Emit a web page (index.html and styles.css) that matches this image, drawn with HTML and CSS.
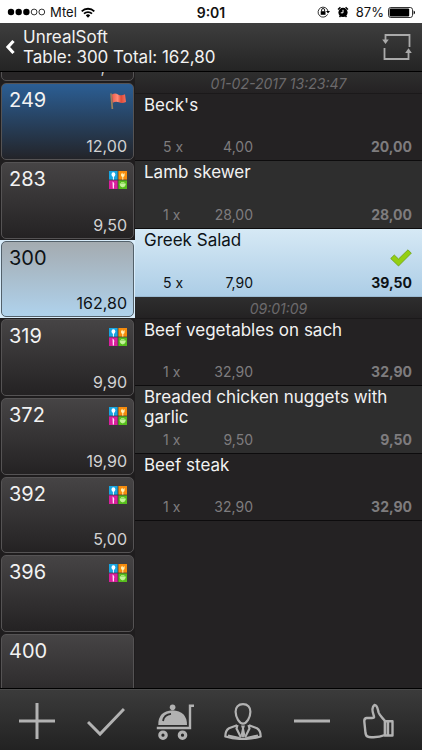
FILE: index.html
```html
<!DOCTYPE html>
<html lang="en">
<head>
<meta charset="utf-8">
<meta name="viewport" content="width=device-width, initial-scale=1">
<title>UnrealSoft</title>
<link rel="stylesheet" href="styles.css">
</head>
<body>
<svg class="defs" aria-hidden="true">
  <linearGradient id="flagred" x1="0" x2="1" y1="0" y2="0"><stop offset="0" stop-color="#ee5c49"/><stop offset=".4" stop-color="#ff8b78"/><stop offset=".65" stop-color="#dc4a38"/><stop offset="1" stop-color="#f4705e"/></linearGradient>
  <symbol id="food" viewBox="0 0 18 18">
    <rect width="8.6" height="8.6" fill="#18a5e0"/><rect x="9.4" width="8.6" height="8.6" fill="#f68b0c"/>
    <rect y="9.4" width="8.6" height="8.6" fill="#d91f9c"/><rect x="9.4" y="9.4" width="8.6" height="8.6" fill="#56bd1d"/>
    <ellipse cx="4.4" cy="3.6" rx="1.9" ry="2.4" fill="#fff"/><path d="M4.4 5v3.6" stroke="#fff" stroke-width="1"/>
    <path d="M12 1.8v2.4q0 1.7 1.8 1.7t1.8-1.7V1.8l-1 1.6-.8-1.8-.8 1.8z" fill="#fff3b8"/><path d="M13.8 5v3.6" stroke="#fff3b8" stroke-width="1"/>
    <path d="M3.5 10.5q2.5 1.5 1.5 4v3H3.8z" fill="#ffe0f6"/>
    <path d="M11 12.8h5.4q-.3 3.2-2.7 3.2T11 12.8zM12 11.5h3.4" fill="#c4f39a" stroke="#c4f39a" stroke-width=".7"/>
  </symbol>
</svg>

<div class="status">
  <div class="carrier">
    <svg width="39" height="8" viewBox="0 0 39 8"><g fill="#000"><circle cx="4" cy="4" r="3.2"/><circle cx="11.7" cy="4" r="3.2"/><circle cx="19.4" cy="4" r="3.2"/></g><g fill="none" stroke="#000" stroke-width=".8"><circle cx="27.1" cy="4" r="2.9"/><circle cx="34.8" cy="4" r="2.9"/></g></svg>
    <span>Mtel</span>
    <svg class="wifi" width="14" height="11" viewBox="0 0 14 11"><g fill="none" stroke="#000" stroke-width="1.8"><path d="M.7 4.3a9 9 0 0 1 12.6 0"/><path d="M3 6.7a5.7 5.7 0 0 1 8 0"/></g><path d="M4.8 8.4a3.2 3.2 0 0 1 4.4 0L7 10.7z"/></svg>
  </div>
  <div class="clock">9:01</div>
  <div class="power">
    <svg width="13" height="12" viewBox="0 0 13 12"><path d="M10.6 8.3A5 5 0 1 1 11 5.2" fill="none" stroke="#000" stroke-width=".8"/><path d="M9 5h4l-2 2.6z"/><rect x="3.7" y="5.2" width="4.8" height="3.6"/><path d="M4.6 5.4V4a1.5 1.5 0 0 1 3 0v1.4" fill="none" stroke="#000" stroke-width=".9"/></svg>
    <svg class="alarm" width="12" height="12" viewBox="0 0 12 12"><circle cx="6" cy="6.4" r="4.6"/><path d="M1 3.4 3.4 1.2M11 3.4 8.6 1.2M2.5 11l1.2-1.4M9.5 11 8.3 9.6" stroke="#000" stroke-width="1.4"/><path d="M6 3.8v3H3.8" fill="none" stroke="#fff"/></svg>
    <span>87%</span>
    <svg width="27" height="11" viewBox="0 0 27 11"><rect x=".5" y=".5" width="24" height="10" rx="2.2" fill="#fff" stroke="#000" stroke-width=".8"/><rect x="1.6" y="1.6" width="19.6" height="7.8" rx="1"/><path d="M25.6 3.6q1.4.4 1.4 1.9t-1.4 1.9z"/></svg>
  </div>
</div>

<header class="topbar">
  <button class="back" aria-label="Back"><svg width="11" height="16" viewBox="0 0 11 16"><path d="M9.500 2 4 8l5.500 6" fill="none" stroke="#fff" stroke-width="3.200"/></svg></button>
  <h1 class="title">UnrealSoft<br>Table: 300 Total: 162,80</h1>
  <button class="swap" aria-label="Refresh"><svg width="30" height="28" viewBox="0 0 30 28"><g fill="none" stroke="#aaa" stroke-width="1.800"><path d="M3.500 8V2h24v12"/><path d="M2.500 15v11h24v-7"/></g><path d="M.2 6.500h6.600L3.500 11z M23.200 20h6.600l-3.300-4.800z" fill="#aaa"/></svg></button>
</header>

<main class="content">
  <nav class="tables">
    <ul>
      <li class="cut"><button class="card"><span class="amount">,</span></button></li>
      <li><button class="card flagged"><span class="number">249</span><svg class="mark" width="18" height="18" viewBox="0 0 18 18"><path d="M2 1.500 3.400 17" stroke="#9b805c" stroke-width="1.700"/><path d="M3 2.600Q6 .4 9 2.400t7-.2L17 10q-4 1.800-7 .3t-6.300.5z" fill="url(#flagred)"/></svg><span class="amount">12,00</span></button></li>
      <li><button class="card"><span class="number">283</span><svg class="mark" width="18" height="18"><use href="#food"/></svg><span class="amount">9,50</span></button></li>
      <li class="current"><button class="card"><span class="number">300</span><span class="amount">162,80</span></button></li>
      <li><button class="card"><span class="number">319</span><svg class="mark" width="18" height="18"><use href="#food"/></svg><span class="amount">9,90</span></button></li>
      <li><button class="card"><span class="number">372</span><svg class="mark" width="18" height="18"><use href="#food"/></svg><span class="amount">19,90</span></button></li>
      <li><button class="card"><span class="number">392</span><svg class="mark" width="18" height="18"><use href="#food"/></svg><span class="amount">5,00</span></button></li>
      <li><button class="card"><span class="number">396</span><svg class="mark" width="18" height="18"><use href="#food"/></svg></button></li>
      <li><button class="card"><span class="number">400</span></button></li>
    </ul>
  </nav>

  <section class="orders">
    <h2 class="time">01-02-2017 13:23:47</h2>
    <article class="item"><h3>Beck's</h3><p><span class="qty">5 x</span><span class="price">4,00</span><b>20,00</b></p></article>
    <article class="item alt"><h3>Lamb skewer</h3><p><span class="qty">1 x</span><span class="price">28,00</span><b>28,00</b></p></article>
    <article class="item chosen"><h3>Greek Salad</h3><svg class="tick" width="22" height="18" viewBox="0 0 22 18"><path d="M.7 9.500 4.300 6l4.200 4L18 .8l3.300 3.400L8.500 17z" fill="#94cf12" stroke="#6c9f16" stroke-width=".8"/></svg><p><span class="qty">5 x</span><span class="price">7,90</span><b>39,50</b></p></article>
    <h2 class="time">09:01:09</h2>
    <article class="item"><h3>Beef vegetables on sach</h3><p><span class="qty">1 x</span><span class="price">32,90</span><b>32,90</b></p></article>
    <article class="item alt"><h3>Breaded chicken nuggets with garlic</h3><p><span class="qty">1 x</span><span class="price">9,50</span><b>9,50</b></p></article>
    <article class="item"><h3>Beef steak</h3><p><span class="qty">1 x</span><span class="price">32,90</span><b>32,90</b></p></article>
  </section>
</main>

<footer class="toolbar">
  <button aria-label="Add"><svg viewBox="0 0 38 38"><path d="M19 1v36M1 19h36" stroke="#b2b2b2" stroke-width="3"/></svg></button>
  <button aria-label="Confirm"><svg viewBox="0 0 38 38"><path d="M1 20l12 12L37 7" fill="none" stroke="#b2b2b2" stroke-width="3"/></svg></button>
  <button aria-label="Serve"><svg viewBox="0 0 38 38"><g fill="#b2b2b2"><circle cx="16.600" cy="5.300" r="2.800"/><path d="M2.300 23Q2 9 16.500 8.300 31 9 31 23z"/></g><path d="M7 19Q8 12.500 15 11.800" fill="none" stroke="#2e2e2e" stroke-width="1.800"/><path d="M.8 26H34V3.700h4" fill="none" stroke="#b2b2b2" stroke-width="2.400"/><g fill="none" stroke="#b2b2b2" stroke-width="3.200"><circle cx="7" cy="33.200" r="3.200"/><circle cx="26.500" cy="33.200" r="3.200"/></g></svg></button>
  <button aria-label="Customer"><svg viewBox="0 0 38 38"><g fill="none" stroke="#b2b2b2" stroke-width="2.200" stroke-linejoin="round"><path d="M19 2.200c-4.600 0-7.500 2.800-7.400 7.600.2 6 3.700 11.800 7.400 11.800s7.300-5.800 7.400-11.800C26.500 5 23.600 2.200 19 2.200z"/><path d="M13 23.200 5 26.200Q1.300 28.500 1.300 34.500q17.700 5 35.400 0Q36.700 28.500 33 26.200l-8-3"/><path d="M13.500 23 12.500 26.500l4.500 9M24.500 23l1 3.500-4.500 9M4 33.500 15.500 36M34 33.500 22.500 36"/></g><path d="M17 23.600h4l-1 2.800 1.300 6.600-2.300 3-2.300-3L18 26.400z" fill="#b2b2b2"/></svg></button>
  <button aria-label="Remove"><svg viewBox="0 0 38 38"><path d="M1 19h36" stroke="#b2b2b2" stroke-width="3"/></svg></button>
  <button aria-label="Approve"><svg viewBox="0 0 38 38"><g fill="none" stroke="#b2b2b2" stroke-width="2.400" stroke-linejoin="round"><path d="M23 19C20.500 15.800 17.600 13.700 16.600 10.500 15.800 7.500 15.500 2.800 12.500 3 9.800 4.800 10 9 12 14.500 12.400 15.800 11.500 16 10 16H4.500Q2 16.500 2.300 19.500L3.500 31Q4 34.800 7 35q9 1 16-2z"/><path d="M23 19.300h7.500v14.200H23zM26 20v13"/></g></svg></button>
</footer>
</body>
</html>
```
FILE: styles.css
```css
* { box-sizing: border-box; margin: 0; padding: 0; }

body {
  display: flex;
  flex-direction: column;
  height: 100vh;
  overflow: hidden;
  background: #242223;
  color: #f2f2f2;
  font-family: Inter, "Liberation Sans", sans-serif;
}

button {
  border: 0;
  background: none;
  color: inherit;
  font: inherit;
}

svg { display: block; flex: none; }
ul { list-style: none; }
.defs { position: absolute; width: 0; height: 0; }

.status {
  display: grid;
  grid-template-columns: 1fr auto 1fr;
  align-items: center;
  flex: none;
  height: 23px;
  padding: 1px 7px 0;
  background: #fff;
  color: #111;
  font-size: 13px;
}

.carrier, .power { display: flex; align-items: center; gap: 4px; }
.power { justify-content: flex-end; }
.alarm { margin: 0 3px; }
.clock { font-size: 14px; font-weight: 600; }

.topbar {
  display: flex;
  align-items: center;
  flex: none;
  height: 49px;
  padding: 0 10px 0 4px;
  border-bottom: 1px solid #000;
  background: linear-gradient(#3e3e3e, #242424);
}

.back { width: 19px; }

.title {
  flex: 1;
  font-size: 17px;
  font-weight: 400;
  line-height: 20px;
}

.content { display: flex; flex: 1; min-height: 0; }

.tables { flex: none; width: 135px; overflow: hidden; background: #1f1d1e; }
.tables li { height: 79px; padding: 1px; }
.tables li:nth-child(3n+1) { height: 78px; }

.tables .cut:first-child {
  display: flex;
  align-items: flex-end;
  height: 10px;
  padding: 0 1px 1px;
  overflow: hidden;
}

.card {
  display: grid;
  grid-template-columns: 1fr auto;
  grid-template-rows: 1fr auto;
  width: 133px;
  height: 100%;
  padding: 4px 6px 3px 7px;
  border: 1px solid #555354;
  border-radius: 5px;
  background: linear-gradient(#464445, #242223);
  text-align: left;
}

.cut .card { flex: none; height: 76px; background: #272526; }
.cut .amount { padding-right: 22px; }
.flagged { background: linear-gradient(#2b5e94, #232429); }
.tables .current { background: #d9edfb; }
.current .card { border-color: #53616b; background: linear-gradient(#a4abb0, #afd2ec); color: #0d1216; }

.number { font-size: 20px; line-height: 24px; }
.mark { margin-top: 4px; }

.amount {
  grid-row: 2;
  grid-column: 1 / -1;
  color: #d2d2d2;
  font-size: 16px;
  line-height: 20px;
  text-align: right;
}

.current .amount { color: inherit; }

.orders { flex: 1; min-width: 0; overflow: hidden; background: #242223; }

.time {
  height: 22px;
  border-bottom: 1px solid #1b191a;
  background: linear-gradient(#2e2e2e, #242223);
  color: #6c6a6c;
  font-size: 14px;
  font-style: italic;
  font-weight: 400;
  line-height: 23px;
  text-align: center;
}

.item {
  position: relative;
  display: flex;
  flex-direction: column;
  justify-content: space-between;
  min-height: 67px;
  padding: 1px 10px 4px 9px;
  border-bottom: 1px solid #0d0c0d;
}

.item h3 { font-size: 17px; font-weight: 400; line-height: 20px; }

.item p {
  display: grid;
  grid-template-columns: 44px 65px 1fr;
  align-items: center;
  color: #7e7c7e;
  font-size: 14px;
  line-height: 18px;
}

.qty { padding-left: 19px; }
.price { text-align: right; }
.item b { text-align: right; font-weight: 700; }

.alt { min-height: 68px; background: #2e2e2e; }

.chosen {
  min-height: 68px;
  border-color: #9bbad2;
  background: linear-gradient(#d6e9f5, #accde6);
}

.chosen, .chosen p { color: #0d1216; }
.tick { position: absolute; right: 10px; top: 20px; }

.toolbar {
  display: flex;
  align-items: center;
  justify-content: space-between;
  flex: none;
  height: 62px;
  padding: 3px 22px 0 18px;
  border-top: 1px solid #000;
  background: linear-gradient(#4a4a4a 1px, #3b3b3b 1px, #222);
}

.toolbar svg { width: 38px; height: 38px; }
```
